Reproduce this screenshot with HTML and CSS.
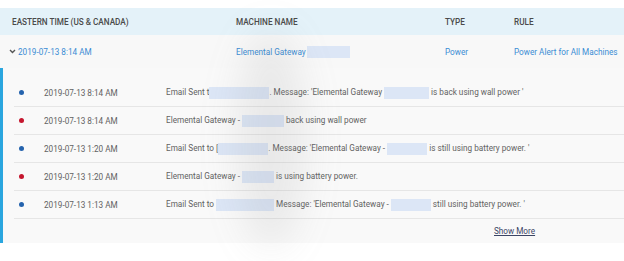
FILE: index.html
```html
<!DOCTYPE html>
<html lang="en">
<head>
  <meta charset="UTF-8" />
  <title>Alerts</title>
  <link rel="stylesheet" href="styles.css">
</head>
<body>
  <div class="alerts">
    <div class="alerts-head">
      <div>Eastern Time (US &amp; Canada)</div>
      <div>Machine Name</div>
      <div>Type</div>
      <div>Rule</div>
    </div>
    <div class="alerts-main">
      <div class="link"><svg class="chev" width="7" height="5" viewBox="0 0 7 5"><path d="M1 1l2.5 2.5L6 1" fill="none" stroke="#555" stroke-width="1.4"/></svg>2019-07-13 8:14 AM</div>
      <div class="link">Elemental Gateway <span class="mask mask-head"></span></div>
      <div class="link">Power</div>
      <div class="link">Power Alert for All Machines</div>
    </div>
    <div class="alerts-detail">
      <div class="event">
        <span class="dot blue"></span>
        <span class="when">2019-07-13 8:14 AM</span>
        <span class="msg">Email Sent t<span class="mask w60"></span>. Message: 'Elemental Gateway <span class="mask w45"></span> is back using wall power '</span>
      </div>
      <div class="event">
        <span class="dot red"></span>
        <span class="when">2019-07-13 8:14 AM</span>
        <span class="msg">Elemental Gateway - <span class="mask w42"></span> back using wall power</span>
      </div>
      <div class="event">
        <span class="dot blue"></span>
        <span class="when">2019-07-13 1:20 AM</span>
        <span class="msg">Email Sent to [<span class="mask w52"></span>. Message: 'Elemental Gateway - <span class="mask w40"></span> is still using battery power. '</span>
      </div>
      <div class="event">
        <span class="dot red"></span>
        <span class="when">2019-07-13 1:20 AM</span>
        <span class="msg">Elemental Gateway - <span class="mask w34"></span> is using battery power.</span>
      </div>
      <div class="event">
        <span class="dot blue"></span>
        <span class="when">2019-07-13 1:13 AM</span>
        <span class="msg">Email Sent to <span class="mask w58"></span> Message: 'Elemental Gateway - <span class="mask w40"></span> still using battery power. '</span>
      </div>
      <div class="more"><a href="#">Show More</a></div>
    </div>
    <div class="smear"></div>
  </div>
</body>
</html>
```

FILE: styles.css
```css
* {
  box-sizing: border-box;
  margin: 0;
  padding: 0;
}

body {
  font-family: Roboto, 'Liberation Sans', sans-serif;
  font-size: 8.2px;
  color: #626262;
  background: #fff;
}

.alerts {
  position: relative;
  padding-top: 8px;
  overflow: hidden;
  height: 261px;
}

.alerts-head,
.alerts-main {
  display: grid;
  grid-template-columns: 224px 209px 69px 1fr;
  align-items: center;
  padding-left: 12px;
}

.alerts-head {
  height: 27px;
  background: #e4f2f9;
  color: #4a4a4a;
  font-weight: 500;
  text-transform: uppercase;
}

.alerts-main {
  height: 33px;
  background: #f8f8f8;
}

.link {
  color: #3a8cd4;
  display: flex;
  align-items: center;
}

.chev {
  margin-left: -3px;
  margin-right: 2px;
}

.mask {
  display: inline-block;
  height: 12px;
  background: #dce6f6;
  vertical-align: middle;
}

.mask-head { width: 43px; margin-left: 1px; }
.w60 { width: 60px; }
.w58 { width: 58px; }
.w52 { width: 50px; }
.w45 { width: 45px; }
.w42 { width: 42px; }
.w40 { width: 40px; }
.w34 { width: 32px; }

.alerts-detail {
  border-left: 3px solid #2aa6df;
  background: #f9f9f9;
  padding-top: 11px;
  height: 175px;
}

.event {
  display: flex;
  align-items: center;
  height: 28px;
  margin-left: 11px;
  border-bottom: 1px solid #e6e6e6;
}

.dot {
  width: 5px;
  height: 5px;
  border-radius: 50%;
  margin-left: 5px;
}

.dot.blue { background: #2563ad; }
.dot.red { background: #c5162e; }

.when {
  width: 122px;
  margin-left: 20px;
}

.msg {
  white-space: nowrap;
}

.more {
  height: 23px;
  display: flex;
  align-items: center;
  padding-left: 491px;
}

.more a {
  color: #3b4565;
  text-decoration: underline;
}

.smear {
  position: absolute;
  left: 236px;
  top: 30px;
  width: 70px;
  height: 220px;
  background: rgba(120, 120, 120, 0.12);
  border-radius: 50%;
  filter: blur(18px);
  pointer-events: none;
}
```
